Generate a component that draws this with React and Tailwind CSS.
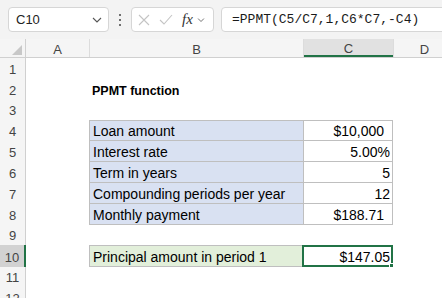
import React from 'react';

const ROWS = [
  { n: 1, h: 21 },
  { n: 2, h: 21, title: 'PPMT function' },
  { n: 3, h: 20 },
  { n: 4, h: 21, label: 'Loan amount', value: '$10,000', pad: 'pr-[8px]', first: true },
  { n: 5, h: 21, label: 'Interest rate', value: '5.00%', pad: 'pr-[2px]' },
  { n: 6, h: 21, label: 'Term in years', value: '5', pad: 'pr-[2px]' },
  { n: 7, h: 21, label: 'Compounding periods per year', value: '12', pad: 'pr-[2px]' },
  { n: 8, h: 21, label: 'Monthly payment', value: '$188.71', pad: 'pr-[8px]' },
  { n: 9, h: 20 },
  { n: 10, h: 22, result: true },
  { n: 11, h: 20 },
  { n: 12, h: 21 },
];

function Chevron({ className = '' }) {
  return (
    <svg width="10" height="6" viewBox="0 0 10 6" className={className}>
      <path d="M1 1 L5 5 L9 1" fill="none" stroke="#555" strokeWidth="1.1" />
    </svg>
  );
}

function Toolbar() {
  return (
    <div className="h-[39px] bg-[#f3f3f3] flex items-center pl-[8px]">
      {/* Name box */}
      <div className="w-[101px] h-[25px] bg-white border border-[#d6d6d6] rounded-[4px] flex items-center pl-[7px] pr-[6px] shrink-0">
        <span className="text-[13px] text-[#222] flex-1">C10</span>
        <Chevron />
      </div>
      {/* dots */}
      <div className="w-[22px] flex flex-col items-center gap-[3px] shrink-0">
        <span className="w-[2px] h-[2px] bg-[#444] rounded-full" />
        <span className="w-[2px] h-[2px] bg-[#444] rounded-full" />
        <span className="w-[2px] h-[2px] bg-[#444] rounded-full" />
      </div>
      {/* cancel / enter / fx */}
      <div className="w-[83px] h-[25px] bg-white border border-[#d6d6d6] rounded-[4px] flex items-center pl-[6px] shrink-0">
        <svg width="12" height="12" viewBox="0 0 12 12">
          <path d="M1 1 L11 11 M11 1 L1 11" stroke="#c4c4c4" strokeWidth="1.1" />
        </svg>
        <svg width="14" height="11" viewBox="0 0 14 11" className="ml-[9px]">
          <path d="M1 6 L5 10 L13 1" fill="none" stroke="#c4c4c4" strokeWidth="1.1" />
        </svg>
        <span className="ml-[9px] text-[15px] italic text-[#333] leading-none" style={{ fontFamily: '"Liberation Serif", serif' }}>
          fx
        </span>
        <Chevron className="ml-[3px] scale-75" />
      </div>
      {/* formula */}
      <div className="ml-[7px] w-[260px] h-[25px] bg-white border border-[#d6d6d6] rounded-l-[4px] flex items-center pl-[10px] shrink-0">
        <span className="text-[13px] text-[#1a1a1a]" style={{ fontFamily: '"Liberation Mono", monospace' }}>
          =PPMT(C5/C7,1,C6*C7,-C4)
        </span>
      </div>
    </div>
  );
}

function HeaderRow() {
  return (
    <div className="flex h-[19px] bg-[#f5f5f5] border-b border-[#d0d0d0] text-[13px] text-[#444] leading-none">
      <div className="w-[26px] shrink-0 border-r border-[#d0d0d0] relative">
        <svg width="10" height="10" viewBox="0 0 10 10" className="absolute right-[3px] bottom-[2px]">
          <path d="M10 0 L10 10 L0 10 Z" fill="#c8c8c8" />
        </svg>
      </div>
      <div className="w-[64px] shrink-0 flex items-center justify-center border-r border-[#dcdcdc] pt-[2px]">A</div>
      <div className="w-[214px] shrink-0 flex items-center justify-center border-r border-[#dcdcdc] pt-[2px]">B</div>
      <div className="w-[89px] shrink-0 flex items-center justify-center bg-[#e1e1e1] border-b-2 border-[#217346] pt-[2px]">C</div>
      <div className="w-[62px] shrink-0 flex items-center justify-center border-l border-[#dcdcdc] pt-[2px]">D</div>
    </div>
  );
}

function Row({ row }) {
  const active = row.result;
  return (
    <div className="flex" style={{ height: row.h }}>
      <div
        className={`w-[26px] shrink-0 flex items-end justify-center pb-[3px] leading-none text-[13px] text-[#444] ${
          active ? 'bg-[#d2d2d2] border-r-2 border-[#217346]' : 'bg-[#f5f5f5] border-r border-[#d0d0d0]'
        }`}
      >
        {row.n}
      </div>
      <div className="w-[63px] shrink-0" />
      {row.title && (
        <div className="flex-1 flex items-end pl-[3px] pb-[3px] leading-none text-[12.5px] font-bold text-black">
          {row.title}
        </div>
      )}
      {row.label && (
        <>
          <div
            className={`w-[215px] shrink-0 bg-[#d9e1f2] border-l border-r border-b border-[#bfbfbf] flex items-end pl-[3px] pb-[2px] leading-none text-[14px] text-black ${
              row.first ? 'border-t' : ''
            }`}
          >
            {row.label}
          </div>
          <div
            className={`w-[89px] shrink-0 bg-white border-r border-b border-[#bfbfbf] flex items-end justify-end pb-[2px] leading-none text-[14px] text-black ${row.pad} ${
              row.first ? 'border-t' : ''
            }`}
          >
            {row.value}
          </div>
        </>
      )}
      {row.result && (
        <>
          <div className="w-[214px] shrink-0 bg-[#e2efda] border border-[#bfbfbf] flex items-end pl-[3px] pb-[2px] leading-none text-[14px] text-black">
            Principal amount in period 1
          </div>
          <div className="w-[91px] shrink-0 -ml-[1px] relative bg-white border-2 border-[#217346] flex items-end justify-end pr-[1px] pb-[1px] leading-none text-[14px] text-black">
            $147.05
            <span className="absolute -right-[3px] -bottom-[3px] w-[5px] h-[5px] bg-[#217346] border border-white" />
          </div>
        </>
      )}
    </div>
  );
}

export default function App() {
  return (
    <div
      className="w-[442px] h-[298px] overflow-hidden bg-white"
      style={{ fontFamily: '"Liberation Sans", Arial, sans-serif' }}
    >
      <Toolbar />
      <HeaderRow />
      {ROWS.map((r) => (
        <Row key={r.n} row={r} />
      ))}
    </div>
  );
}
